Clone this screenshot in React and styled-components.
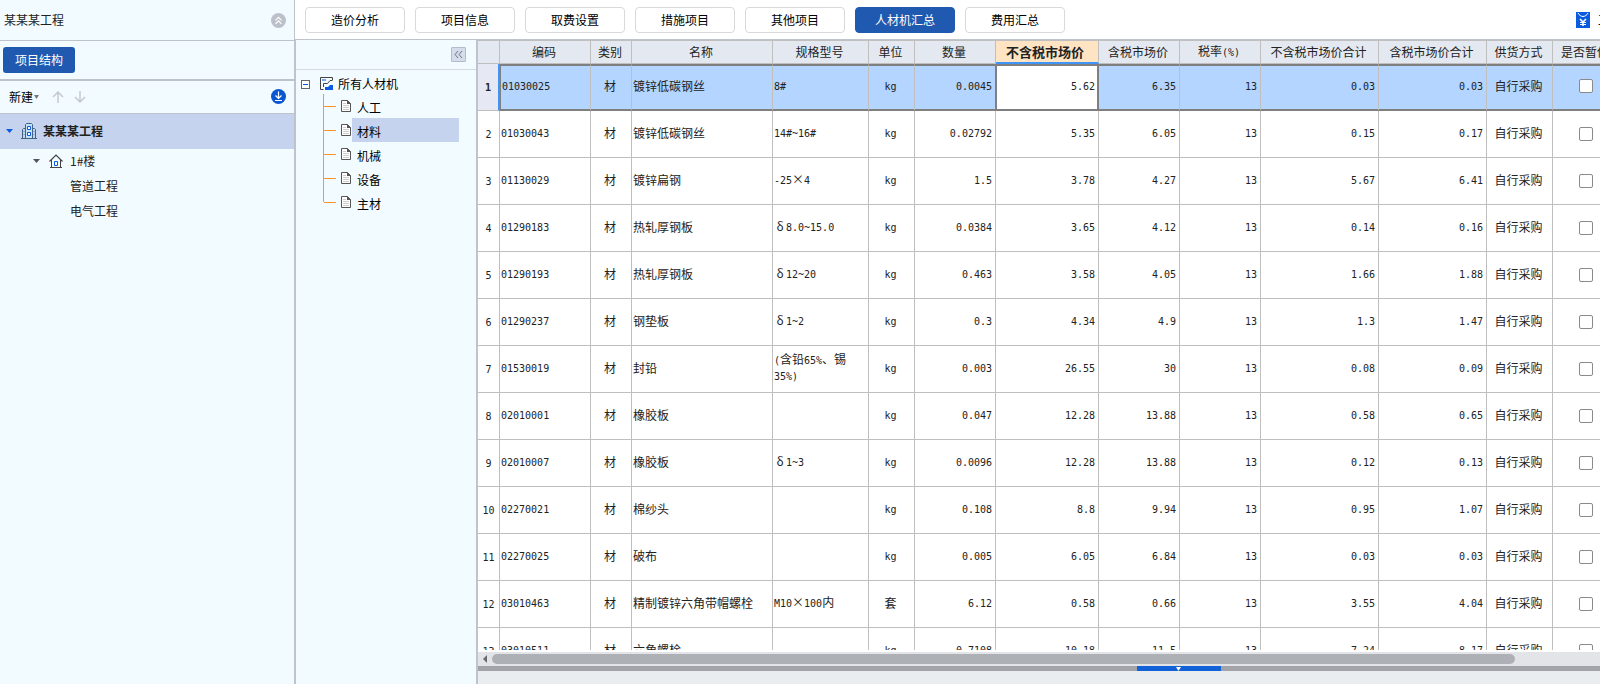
import React, { useState } from 'react';
import styled, { createGlobalStyle, css } from 'styled-components';

const tabs = ['造价分析', '项目信息', '取费设置', '措施项目', '其他项目', '人材机汇总', '费用汇总'];

const categories = ['人工', '材料', '机械', '设备', '主材'];

const columns = [
    { key: 'code', title: '编码', width: 91, align: 'left' },
    { key: 'type', title: '类别', width: 41, align: 'center' },
    { key: 'name', title: '名称', width: 141, align: 'left' },
    { key: 'spec', title: '规格型号', width: 96, align: 'left' },
    { key: 'unit', title: '单位', width: 46, align: 'center' },
    { key: 'amount', title: '数量', width: 81, align: 'right' },
    { key: 'netPrice', title: '不含税市场价', width: 103, align: 'right' },
    { key: 'price', title: '含税市场价', width: 81, align: 'right' },
    { key: 'rate', title: '税率(%)', width: 81, align: 'right' },
    { key: 'netTotal', title: '不含税市场价合计', width: 118, align: 'right' },
    { key: 'total', title: '含税市场价合计', width: 108, align: 'right' },
    { key: 'supply', title: '供货方式', width: 66, align: 'center' },
];

const rows = [
    ['01030025', '材', '镀锌低碳钢丝', '8#', 'kg', '0.0045', '5.62', '6.35', '13', '0.03', '0.03'],
    ['01030043', '材', '镀锌低碳钢丝', '14#~16#', 'kg', '0.02792', '5.35', '6.05', '13', '0.15', '0.17'],
    ['01130029', '材', '镀锌扁钢', '-25×4', 'kg', '1.5', '3.78', '4.27', '13', '5.67', '6.41'],
    ['01290183', '材', '热轧厚钢板', 'δ8.0~15.0', 'kg', '0.0384', '3.65', '4.12', '13', '0.14', '0.16'],
    ['01290193', '材', '热轧厚钢板', 'δ12~20', 'kg', '0.463', '3.58', '4.05', '13', '1.66', '1.88'],
    ['01290237', '材', '钢垫板', 'δ1~2', 'kg', '0.3', '4.34', '4.9', '13', '1.3', '1.47'],
    ['01530019', '材', '封铅', '(含铅65%、锡35%)', 'kg', '0.003', '26.55', '30', '13', '0.08', '0.09'],
    ['02010001', '材', '橡胶板', '', 'kg', '0.047', '12.28', '13.88', '13', '0.58', '0.65'],
    ['02010007', '材', '橡胶板', 'δ1~3', 'kg', '0.0096', '12.28', '13.88', '13', '0.12', '0.13'],
    ['02270021', '材', '棉纱头', '', 'kg', '0.108', '8.8', '9.94', '13', '0.95', '1.07'],
    ['02270025', '材', '破布', '', 'kg', '0.005', '6.05', '6.84', '13', '0.03', '0.03'],
    ['03010463', '材', '精制镀锌六角带帽螺栓', 'M10×100内', '套', '6.12', '0.58', '0.66', '13', '3.55', '4.04'],
    ['03010511', '材', '六角螺栓', '', 'kg', '0.7108', '10.18', '11.5', '13', '7.24', '8.17'],
].map((r) => [...r, '自行采购']);

const GlobalStyle = createGlobalStyle`
    * {
        box-sizing: border-box;
    }
    body {
        margin: 0;
        overflow: hidden;
        font-family: "Noto Sans CJK SC", "Noto Sans", sans-serif;
        font-size: 12px;
        line-height: 14px;
        color: #222;
        background: #fff;
    }
    button {
        font: inherit;
        color: inherit;
        padding: 0;
        border: 0;
        background: none;
        cursor: pointer;
    }
    svg {
        display: block;
        flex: none;
    }
`;

// latin letters and digits are half as wide as a chinese character,
// a greek letter is as wide as one
const Mixed = ({ text }) =>
    text.split(/([\x20-\x7e]+|δ)/).map((part, i) => {
        if (i % 2 === 0) return part;
        return part === 'δ' ? <Wide key={i}>{part}</Wide> : <Half key={i}>{part}</Half>;
    });

const Triangle = ({ color, size = 7 }) => (
    <svg width={size} height={4} viewBox="0 0 8 4" preserveAspectRatio="none">
        <path d="M0 0h8L4 4z" fill={color} />
    </svg>
);

const BuildingIcon = () => (
    <svg width="16" height="16" viewBox="0 0 16 16" fill="none">
        <path d="M4.500 15V1.500l1-1h5l1 1V15" stroke="#3f6486" fill="#c3e2f6" />
        <path d="M4 5.500H2.500l-1 1V15M12 5.500h1.500l1 1V15" stroke="#3f6486" />
        <path d="M2 8.500h2M2 11.500h2M12 8.500h2M12 11.500h2" stroke="#8fb2cc" />
        <path d="M0 15.500h16" stroke="#3f6486" />
        <path d="M6.500 3.500h3v3h-3zM6.500 9.500h3v3h-3z" stroke="#0a5be0" fill="#fff" />
    </svg>
);

const HouseIcon = () => (
    <svg width="14" height="14" viewBox="0 0 14 14" fill="none">
        <path d="M.5 7.500 7 1l6.500 6.500" stroke="#444" strokeWidth="1.200" />
        <path d="M2.500 6v7.500M11.500 6v7.500M1 13.500h12" stroke="#444" />
        <path d="M5.500 7.500h3v4h-3z" stroke="#0a5be0" />
    </svg>
);

const RootIcon = () => (
    <svg width="14" height="14" viewBox="0 0 14 14" fill="none">
        <path d="M12.500 3V.5H.5v12h3" stroke="#444" />
        <path d="M2 3h4" stroke="#7aa7ee" strokeWidth="2" />
        <path d="M12.500 3.500H10L7.500 6.500h-4V10" stroke="#444" />
        <path d="M5 10h3l2-2h3v5H5z" fill="#0a5be0" />
    </svg>
);

const FileIcon = () => (
    <svg width="10" height="12" viewBox="0 0 10 12" fill="none">
        <path d="M.5.5h6l3 3v8h-9z" fill="#fff" stroke="#555" />
        <path d="M6 0v4h4z" fill="#555" />
        <path d="M2 3.500h3M2 5.500h6M2 7.500h6M2 9.500h6" stroke="#ccc" />
    </svg>
);

const YenIcon = () => (
    <svg width="14" height="16" viewBox="0 0 14 16" fill="none">
        <path d="M0 0h14v16H0z" fill="#0a5be0" />
        <path d="M2 1c1 2 3 3.500 5 3.500S11 3 12 1" stroke="#fff" />
        <path d="M4 7l3 3 3-3M7 10v4" stroke="#fff" strokeWidth="1.600" />
        <path d="M4 10.500h6M4 12.500h6" stroke="#fff" />
    </svg>
);

const ArrowIcon = ({ down }) => (
    <svg width="12" height="12" viewBox="0 0 12 12" fill="none" stroke="#c6cad0" strokeWidth="1.500">
        <path d={down ? 'M6 0v11M1 6l5 5 5-5' : 'M6 12V1M1 6l5-5 5 5'} />
    </svg>
);

const App = () => {
    const [tab, setTab] = useState('人材机汇总');
    const [category, setCategory] = useState('材料');

    return (
        <Page>
            <GlobalStyle />
            <Sidebar>
                <ProjectHead>
                    某某某工程
                    <button aria-label="收起">
                        <svg width="15" height="15" viewBox="0 0 15 15" fill="none" stroke="#fff">
                            <circle cx="7.500" cy="7.500" r="7.500" fill="#bcc0ca" stroke="none" />
                            <path d="M4.500 7.300l3-3 3 3M4.500 10.800l3-3 3 3" strokeWidth="1.200" />
                        </svg>
                    </button>
                </ProjectHead>
                <StructureBar>
                    <StructureButton>项目结构</StructureButton>
                </StructureBar>
                <ToolBar>
                    <NewButton>新建<Triangle color="#777" size={5} /></NewButton>
                    <button aria-label="上移"><ArrowIcon /></button>
                    <button aria-label="下移"><ArrowIcon down /></button>
                    <Download aria-label="下载">
                        <svg width="15" height="15" viewBox="0 0 15 15" fill="none" stroke="#fff">
                            <circle cx="7.500" cy="7.500" r="7.500" fill="#0a56d2" stroke="none" />
                            <path d="M7.500 2.500v7M4.500 6.500l3 3 3-3M4 11.500h7" strokeWidth="1.200" />
                        </svg>
                    </Download>
                </ToolBar>
                <ProjectRow>
                    <Triangle color="#0a5be0" />
                    <BuildingIcon />
                    某某某工程
                </ProjectRow>
                <TreeRow $indent={33}>
                    <Triangle color="#555" />
                    <HouseIcon />
                    1#楼
                </TreeRow>
                <TreeRow $indent={70}>管道工程</TreeRow>
                <TreeRow $indent={70}>电气工程</TreeRow>
            </Sidebar>

            <Main>
                <TabBar>
                    {tabs.map((name) => (
                        <Tab key={name} $active={name === tab} onClick={() => setTab(name)}>
                            {name}
                        </Tab>
                    ))}
                    <PriceButton><YenIcon />工料机</PriceButton>
                </TabBar>
                <Content>
                    <CategoryPanel>
                        <PanelHead>
                            <FoldButton aria-label="折叠">
                                <svg width="9" height="9" viewBox="0 0 9 9" fill="none" stroke="#6b7385">
                                    <path d="M4 1 1 4.500 4 8M8 1 5 4.500 8 8" />
                                </svg>
                            </FoldButton>
                        </PanelHead>
                        <RootRow>
                            <Expander aria-label="展开" />
                            <RootIcon />
                            所有人材机
                        </RootRow>
                        <CategoryList>
                            {categories.map((name) => (
                                <Category key={name}>
                                    <FileIcon />
                                    <CategoryButton $active={name === category} onClick={() => setCategory(name)}>
                                        {name}
                                    </CategoryButton>
                                </Category>
                            ))}
                        </CategoryList>
                    </CategoryPanel>

                    <GridPanel>
                        <GridView>
                            <Table>
                                <colgroup>
                                    <Col $width={22} />
                                    {columns.map((c) => <Col key={c.key} $width={c.width} />)}
                                    <Col $width={67} />
                                </colgroup>
                                <thead>
                                    <tr>
                                        <Th />
                                        {columns.map((c) => (
                                            <Th key={c.key} $active={c.key === 'netPrice'}>
                                                <Mixed text={c.title} />
                                            </Th>
                                        ))}
                                        <Th>是否暂估</Th>
                                    </tr>
                                </thead>
                                <tbody>
                                    {rows.map((row, i) => (
                                        <Row key={row[0]} $selected={i === 0}>
                                            <RowHead $selected={i === 0}><Mixed text={String(i + 1)} /></RowHead>
                                            {row.map((value, j) => (
                                                <Td
                                                    key={columns[j].key}
                                                    $align={columns[j].align}
                                                    $editing={i === 0 && columns[j].key === 'netPrice'}
                                                >
                                                    <Mixed text={value} />
                                                </Td>
                                            ))}
                                            <CheckCell $align="center">
                                                <Check type="checkbox" aria-label={`是否暂估 ${row[0]}`} />
                                            </CheckCell>
                                        </Row>
                                    ))}
                                </tbody>
                            </Table>
                        </GridView>
                        <ScrollBar>
                            <ScrollLeft aria-label="向左">
                                <svg width="4" height="8" viewBox="0 0 4 8"><path d="M4 0v8L0 4z" fill="#666a72" /></svg>
                            </ScrollLeft>
                            <Track><Thumb /></Track>
                        </ScrollBar>
                        <Splitter>
                            <SplitHandle aria-label="收起明细"><Triangle color="#fff" size={5} /></SplitHandle>
                        </Splitter>
                        <Detail />
                    </GridPanel>
                </Content>
            </Main>
        </Page>
    );
};

const Page = styled.div`
    display: flex;
    height: 100vh;
`;

const Sidebar = styled.aside`
    flex: none;
    width: 295px;
    background: #f2fbff;
    border-right: 1px solid #bfc3cb;
`;

const ProjectHead = styled.header`
    display: flex;
    align-items: center;
    justify-content: space-between;
    height: 41px;
    padding: 0 8px 0 4px;
    border-bottom: 1px solid #bfc3cb;
`;

const StructureBar = styled.div`
    display: flex;
    align-items: center;
    height: 40px;
    padding: 0 3px;
    border-bottom: 2px solid #bfc3cb;
`;

const StructureButton = styled.button`
    width: 72px;
    height: 26px;
    border-radius: 3px;
    color: #fff;
    background: #2059b0;
`;

const ToolBar = styled.div`
    display: flex;
    align-items: center;
    gap: 10px;
    height: 33px;
    padding: 0 8px 1px 9px;
    border-bottom: 1px solid #bfc3cb;
`;

const NewButton = styled.button`
    display: flex;
    align-items: center;
    gap: 1px;
    margin-right: 3px;
    color: #000;
`;

const Download = styled.button`
    margin-left: auto;
`;

const TreeRow = styled.div`
    display: flex;
    align-items: center;
    height: 25px;
    padding-bottom: 2px;
    padding-left: ${(p) => p.$indent}px;
    svg + svg {
        margin: 0 7px 0 9px;
    }
`;

const ProjectRow = styled(TreeRow)`
    height: 35px;
    padding-left: 6px;
    font-weight: bold;
    background: #c6d3ee;
    svg + svg {
        margin: 0 6px 0 8px;
    }
`;

const Main = styled.main`
    display: flex;
    flex-direction: column;
    flex: 1;
    min-width: 0;
`;

const TabBar = styled.nav`
    display: flex;
    align-items: center;
    gap: 10px;
    height: 40px;
    padding-left: 10px;
    border-bottom: 1px solid #bfc3cb;
    overflow: hidden;
`;

const Tab = styled.button`
    flex: none;
    width: 100px;
    height: 26px;
    border: 1px solid #d9d9d9;
    border-radius: 4px;
    color: #000;
    ${(p) => p.$active && css`
        color: #fff;
        background: #2059b0;
        border-color: #2059b0;
    `}
`;

const PriceButton = styled.button`
    display: flex;
    align-items: center;
    gap: 8px;
    flex: none;
    width: 24px;
    margin-left: auto;
    color: #000;
    white-space: nowrap;
`;

const Content = styled.div`
    display: flex;
    flex: 1;
    min-height: 0;
`;

const CategoryPanel = styled.section`
    flex: none;
    width: 183px;
    background: #f2fbff;
    border-left: 1px solid #bfc3cb;
    border-right: 2px solid #bfc3cb;
`;

const PanelHead = styled.div`
    display: flex;
    align-items: center;
    justify-content: flex-end;
    height: 30px;
    padding-right: 10px;
    border-bottom: 1px solid #d6dbdf;
`;

const FoldButton = styled.button`
    display: flex;
    align-items: center;
    justify-content: center;
    width: 15px;
    height: 15px;
    border: 1px solid #b4bccb;
    border-radius: 1px;
    background: #d5ddea;
`;

const RootRow = styled.div`
    display: flex;
    align-items: center;
    height: 24px;
    padding: 4px 0 0 5px;
    color: #000;
    svg {
        margin: 0 4px 0 10px;
    }
`;

const Expander = styled.button`
    width: 9px;
    height: 9px;
    border: 1px solid #666;
    background: linear-gradient(#0a5be0, #0a5be0) center / 5px 1px no-repeat #fff;
`;

const CategoryList = styled.ul`
    margin: 0 17px 0 27px;
    padding: 0;
    list-style: none;
`;

const Category = styled.li`
    display: flex;
    align-items: center;
    height: 24px;
    border-left: 1px solid #ff9430;
    &::before {
        content: "";
        width: 12px;
        height: 1px;
        margin-right: 5px;
        background: #ff9430;
    }
    &:last-child {
        border-image: linear-gradient(#ff9430 50%, transparent 50%) 1;
    }
`;

const CategoryButton = styled.button`
    flex: 1;
    height: 24px;
    margin-left: 1px;
    padding: 4px 0 0 5px;
    text-align: left;
    color: #000;
    background: ${(p) => (p.$active ? '#c6d3ee' : 'none')};
`;

const GridPanel = styled.section`
    display: flex;
    flex-direction: column;
    flex: 1;
    min-width: 0;
`;

const GridView = styled.div`
    flex: 1;
    min-height: 0;
    margin-bottom: 2px;
    overflow: hidden;
    border-top: 1px solid #bfbfbf;
`;

const Table = styled.table`
    width: 1142px;
    table-layout: fixed;
    border-collapse: separate;
    border-spacing: 0;
    background: #fff;
`;

const Col = styled.col`
    width: ${(p) => p.$width}px;
`;

const Th = styled.th`
    height: 23px;
    padding: 0 2px 0 0;
    font-weight: normal;
    white-space: nowrap;
    background: #e4e9f1;
    border-right: 1px solid #bfbfbf;
    border-bottom: 1px solid #bfbfbf;
    ${(p) => p.$active && css`
        padding-right: 4px;
        font-size: 13px;
        font-weight: bold;
        background: #ffe4c4;
        border-bottom: 2px solid #3f94f7;
    `}
`;

const Td = styled.td`
    height: 47px;
    padding: 0 3px 2px 1px;
    text-align: ${(p) => p.$align};
    border-right: 1px solid #bfbfbf;
    border-bottom: 1px solid #bfbfbf;
    ${(p) => p.$editing && css`
        background: #fff;
        box-shadow: -1px 0 #7f7f7f;
    `}
`;

const CheckCell = styled(Td)`
    padding: 0;
`;

const RowHead = styled.th`
    height: 47px;
    padding: 0;
    font-weight: ${(p) => (p.$selected ? 'bold' : 'normal')};
    background: ${(p) => (p.$selected ? '#e6e9f4' : '#fff')};
    border-right: ${(p) => (p.$selected ? '2px solid #3f94f7' : '1px solid #bfbfbf')};
    border-bottom: 1px solid #bfbfbf;
`;

const Row = styled.tr`
    ${(p) => p.$selected && css`
        background: #b3d5ff;
        ${Td} {
            padding-bottom: 3px;
            border-top: 2px solid #7f7f7f;
            border-bottom: 2px solid #7f7f7f;
        }
        ${RowHead} + ${Td} {
            border-left: 1px solid #7f7f7f;
        }
        ${Td}:nth-child(8) {
            border-left: 1px solid #7f7f7f;
            border-right: 2px solid #7f7f7f;
            padding-right: 2px;
        }
    `}
`;

const Half = styled.span`
    font-family: "DejaVu Sans Mono", "Liberation Mono", monospace;
    font-size: 10px;
`;

const Wide = styled.span`
    display: inline-block;
    width: 12px;
    text-align: center;
`;

const Check = styled.input`
    appearance: none;
    display: block;
    width: 14px;
    height: 14px;
    margin: 0 auto;
    border: 1px solid #8a8a8a;
    border-radius: 2px;
    background: #fff;
`;

const ScrollBar = styled.div`
    display: flex;
    align-items: center;
    height: 14px;
    background: #e3e4e7;
`;

const ScrollLeft = styled.button`
    display: flex;
    justify-content: center;
    width: 14px;
`;

const Track = styled.div`
    flex: 1;
`;

const Thumb = styled.div`
    width: 92.3%;
    height: 10px;
    border-radius: 5px;
    background: #adb0b5;
`;

const Splitter = styled.div`
    display: flex;
    height: 5px;
    padding-left: 58.7%;
    background: #a3a4a9;
`;

const SplitHandle = styled.button`
    display: flex;
    align-items: center;
    justify-content: center;
    width: 84px;
    height: 5px;
    background: #1261d6;
`;

const Detail = styled.footer`
    height: 13px;
    background: #e9edf0;
`;

export default App;
